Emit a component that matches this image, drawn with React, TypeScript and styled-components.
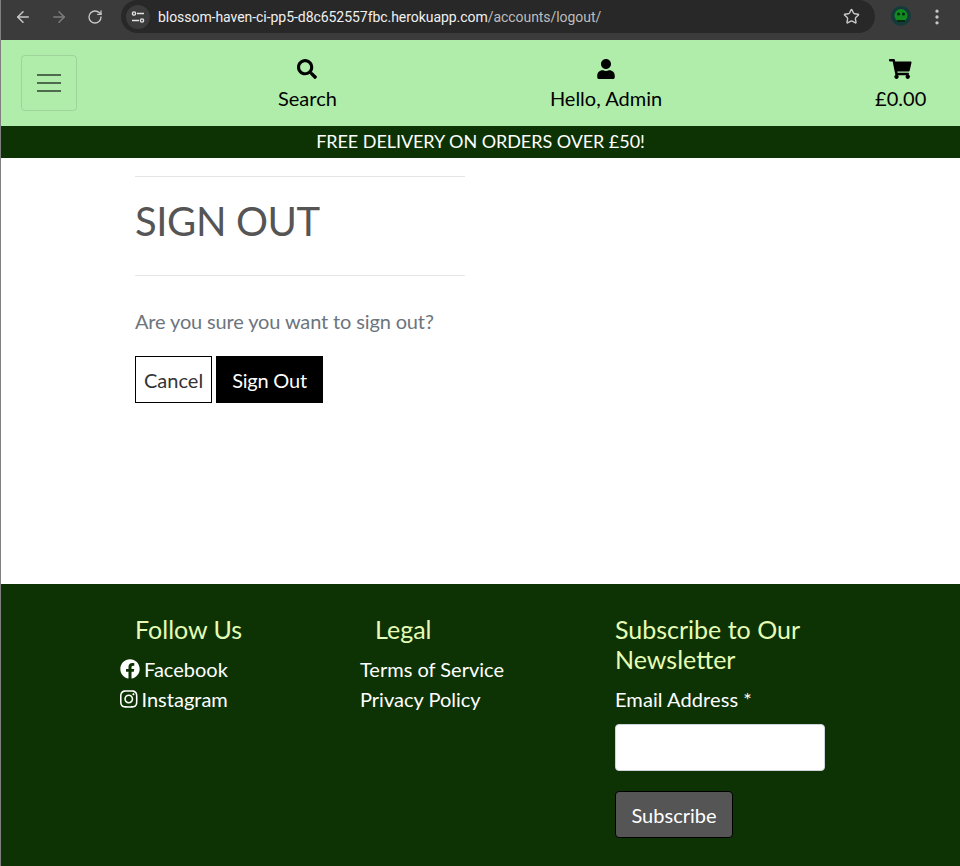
import React from "react";
import styled, { createGlobalStyle } from "styled-components";
import { FaSearch, FaUser, FaShoppingCart, FaFacebook, FaInstagram } from "react-icons/fa";
import { ArrowLeft, ArrowRight, RotateCw, Star, EllipsisVertical } from "lucide-react";

const GlobalStyle = createGlobalStyle`
  html, body {
    margin: 0;
    padding: 0;
    background: #fff;
  }
  * {
    box-sizing: border-box;
  }
  body {
    font-family: Lato, "Open Sans", sans-serif;
  }
`;

const Page = styled.div`
  width: 960px;
  height: 866px;
  display: flex;
  flex-direction: column;
  overflow: hidden;
  border-left: 1px solid #808080;
`;

const BrowserBar = styled.div`
  height: 40px;
  flex: none;
  background: #3b3b3b;
  display: flex;
  align-items: flex-start;
  color: #c7c7c7;
  padding-left: 13px;
`;

const BarIcon = styled.span<{ $dim?: boolean; $gap?: number }>`
  width: 18px;
  height: 33px;
  display: flex;
  align-items: center;
  justify-content: center;
  margin-right: ${(p) => p.$gap ?? 18}px;
  color: ${(p) => (p.$dim ? "#7d7d7d" : "#c7c7c7")};
`;

const UrlPill = styled.div`
  width: 754px;
  height: 33px;
  margin-left: 9px;
  background: #282828;
  border-radius: 17px;
  display: flex;
  align-items: center;
  padding: 0 15px 0 5px;
  font-family: "Roboto", "Liberation Sans", sans-serif;
  font-size: 14px;
  letter-spacing: -0.05px;
`;

const SiteChip = styled.span`
  width: 24px;
  height: 24px;
  border-radius: 50%;
  background: #3c3c3c;
  display: flex;
  align-items: center;
  justify-content: center;
  margin-right: 8px;
`;

const UrlHost = styled.span`
  color: #f0f0f0;
`;

const UrlPath = styled.span`
  color: #bdbdbd;
`;

const PillEnd = styled.span`
  margin-left: auto;
  display: flex;
  color: #c7c7c7;
`;

const Avatar = styled.svg`
  width: 20px;
  height: 20px;
  margin: 6px 0 0 16px;
`;

const Dots = styled.span`
  margin: 7px 0 0 16px;
  display: flex;
  color: #c7c7c7;
`;

const Header = styled.header`
  height: 86px;
  flex: none;
  background: #b0edab;
  display: flex;
  align-items: center;
  padding-left: 20px;
`;

const Toggler = styled.button`
  width: 56px;
  height: 56px;
  border: 1px solid rgba(0, 0, 0, 0.1);
  border-radius: 4px;
  background: transparent;
  padding: 0 2px 0 0;
  display: flex;
  align-items: center;
  justify-content: center;
  color: rgba(0, 0, 0, 0.55);
`;

const NavGroup = styled.nav`
  display: flex;
  align-self: flex-start;
  margin: 19px 0 0 201px;
  gap: 213px;
`;

const NavItem = styled.a`
  display: flex;
  flex-direction: column;
  align-items: center;
  color: #000;
  font-size: 20px;
  line-height: 30px;
  gap: 4px;
  svg {
    font-size: 20px;
  }
`;

const CartIcon = styled(FaShoppingCart)`
  width: 22.5px;
`;

const Banner = styled.div`
  height: 32px;
  flex: none;
  background: #0d3305;
  color: #fff;
  font-size: 18px;
  line-height: 30px;
  letter-spacing: -0.06px;
  text-align: center;
`;

const Main = styled.main`
  flex: 1;
  padding: 18px 0 0 134px;
`;

const Column = styled.section`
  width: 330px;
`;

const Rule = styled.hr`
  margin: 0;
  border: 0;
  border-top: 1px solid #e5e5e5;
`;

const Title = styled.h1`
  margin: 0;
  height: 98px;
  font-size: 40px;
  font-weight: 400;
  line-height: 88px;
  letter-spacing: -0.4px;
  color: #555;
`;

const Lead = styled.p`
  margin: 30px 0 20px;
  font-size: 20px;
  line-height: 30px;
  letter-spacing: -0.14px;
  color: #6c757d;
`;

const Actions = styled.div`
  display: flex;
  gap: 4px;
`;

const ActionButton = styled.a<{ $solid?: boolean }>`
  height: 47px;
  padding: 0 ${(p) => (p.$solid ? 15 : 8)}px;
  display: flex;
  align-items: center;
  font-size: 20px;
  letter-spacing: ${(p) => (p.$solid ? -0.2 : 0)}px;
  border: 1px solid #000;
  background: ${(p) => (p.$solid ? "#000" : "#fff")};
  color: ${(p) => (p.$solid ? "#fff" : "#333")};
`;

const Footer = styled.footer`
  height: 282px;
  flex: none;
  background: #0d3305;
  padding: 30px 0 0 119px;
  display: grid;
  grid-template-columns: 240px 240px 240px;
  align-items: start;
  color: #fff;
`;

const FooterTitle = styled.h5`
  margin: 0 0 10px;
  padding-left: 15px;
  font-size: 25px;
  font-weight: 400;
  line-height: 30px;
  color: #e6fcb4;
`;

const FooterLink = styled.a`
  display: flex;
  align-items: center;
  gap: 4px;
  height: 30px;
  font-size: 20px;
  color: #fff;
  svg {
    font-size: 20px;
  }
`;

const InstagramIcon = styled(FaInstagram)`
  width: 17.5px;
`;

const Newsletter = styled.form`
  padding-left: 15px;
  width: 225px;
  ${FooterTitle} {
    padding-left: 0;
    width: 200px;
  }
`;

const Label = styled.label`
  display: block;
  font-size: 20px;
  line-height: 30px;
  letter-spacing: 0.08px;
`;

const Input = styled.input`
  display: block;
  width: 210px;
  height: 47px;
  margin-top: 10px;
  border: 1px solid #ced4da;
  border-radius: 4px;
  background: #fff;
`;

const Subscribe = styled.button`
  display: block;
  width: 118px;
  height: 47px;
  margin-top: 20px;
  background: #555;
  border: 1px solid #000;
  border-radius: 4px;
  color: #fff;
  font-family: inherit;
  font-size: 20px;
  padding: 0;
`;

const App = () => {
  return (
    <>
      <GlobalStyle />
      <Page>
        <BrowserBar>
          <BarIcon><ArrowLeft size={18} /></BarIcon>
          <BarIcon $dim><ArrowRight size={18} /></BarIcon>
          <BarIcon $gap={8}><RotateCw size={16} /></BarIcon>
          <UrlPill>
            <SiteChip>
              <svg width="14" height="14" viewBox="0 0 14 14" fill="none" stroke="#e3e3e3" strokeWidth="1.4">
                <path d="M6 3.5h7M1 10.5h7" />
                <circle cx="3" cy="3.5" r="1.6" />
                <circle cx="11" cy="10.5" r="1.6" />
              </svg>
            </SiteChip>
            <UrlHost>blossom-haven-ci-pp5-d8c652557fbc.herokuapp.com</UrlHost>
            <UrlPath>/accounts/logout/</UrlPath>
            <PillEnd><Star size={17} /></PillEnd>
          </UrlPill>
          <Avatar viewBox="0 0 20 20">
            <circle cx="10" cy="10" r="10" fill="#143a3a" />
            <circle cx="10" cy="9.5" r="6.5" fill="#128a22" />
            <circle cx="7.5" cy="8" r="1.6" fill="#0a2a10" />
            <circle cx="12.5" cy="8" r="1.6" fill="#0a2a10" />
            <path d="M6 14h8v2H6z" fill="#0a2a10" />
          </Avatar>
          <Dots><EllipsisVertical size={20} /></Dots>
        </BrowserBar>
        <Header>
          <Toggler aria-label="Menu">
            <svg width="30" height="30" viewBox="0 0 30 30">
              <path d="M4 7h24M4 15h24M4 23h24" stroke="currentColor" strokeWidth="2" strokeMiterlimit="10" />
            </svg>
          </Toggler>
          <NavGroup>
            <NavItem><FaSearch />Search</NavItem>
            <NavItem><FaUser />Hello, Admin</NavItem>
            <NavItem><CartIcon />£0.00</NavItem>
          </NavGroup>
        </Header>
        <Banner>FREE DELIVERY ON ORDERS OVER £50!</Banner>
        <Main>
          <Column>
            <Rule />
            <Title>SIGN OUT</Title>
            <Rule />
            <Lead>Are you sure you want to sign out?</Lead>
            <Actions>
              <ActionButton>Cancel</ActionButton>
              <ActionButton $solid>Sign Out</ActionButton>
            </Actions>
          </Column>
        </Main>
        <Footer>
          <div>
            <FooterTitle>Follow Us</FooterTitle>
            <FooterLink><FaFacebook />Facebook</FooterLink>
            <FooterLink><InstagramIcon />Instagram</FooterLink>
          </div>
          <div>
            <FooterTitle>Legal</FooterTitle>
            <FooterLink>Terms of Service</FooterLink>
            <FooterLink>Privacy Policy</FooterLink>
          </div>
          <Newsletter>
            <FooterTitle>Subscribe to Our Newsletter</FooterTitle>
            <Label>Email Address *</Label>
            <Input type="email" />
            <Subscribe type="button">Subscribe</Subscribe>
          </Newsletter>
        </Footer>
      </Page>
    </>
  );
};

export default App;
